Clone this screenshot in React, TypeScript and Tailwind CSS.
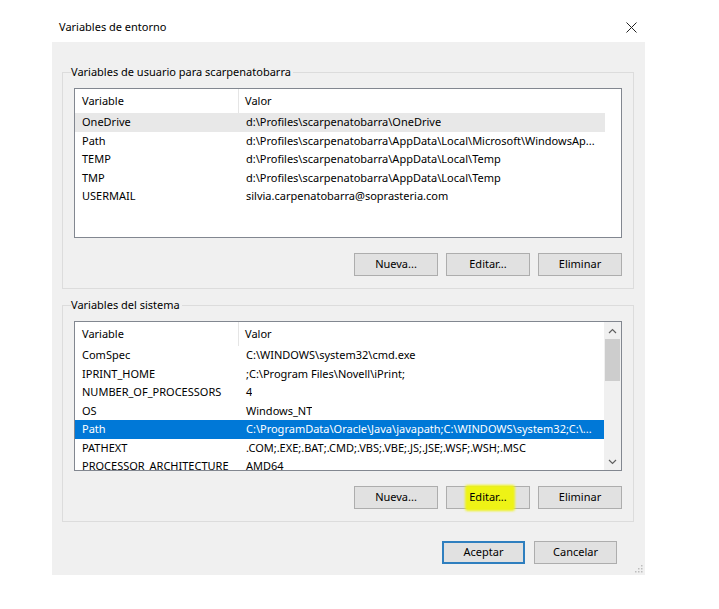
import React from "react";

type Row = { name: string; value: string; sel?: "gray" | "blue" };

const userRows: Row[] = [
  { name: "OneDrive", value: "d:\\Profiles\\scarpenatobarra\\OneDrive", sel: "gray" },
  { name: "Path", value: "d:\\Profiles\\scarpenatobarra\\AppData\\Local\\Microsoft\\WindowsAp..." },
  { name: "TEMP", value: "d:\\Profiles\\scarpenatobarra\\AppData\\Local\\Temp" },
  { name: "TMP", value: "d:\\Profiles\\scarpenatobarra\\AppData\\Local\\Temp" },
  { name: "USERMAIL", value: "silvia.carpenatobarra@soprasteria.com" },
];

const sysRows: Row[] = [
  { name: "ComSpec", value: "C:\\WINDOWS\\system32\\cmd.exe" },
  { name: "IPRINT_HOME", value: ";C:\\Program Files\\Novell\\iPrint;" },
  { name: "NUMBER_OF_PROCESSORS", value: "4" },
  { name: "OS", value: "Windows_NT" },
  { name: "Path", value: "C:\\ProgramData\\Oracle\\Java\\javapath;C:\\WINDOWS\\system32;C:\\...", sel: "blue" },
  { name: "PATHEXT", value: ".COM;.EXE;.BAT;.CMD;.VBS;.VBE;.JS;.JSE;.WSF;.WSH;.MSC" },
  { name: "PROCESSOR_ARCHITECTURE", value: "AMD64" },
];

function Chevron({ up }: { up?: boolean }) {
  return (
    <svg width="9" height="6" viewBox="0 0 9 6">
      <polyline
        points={up ? "1,5 4.5,1.5 8,5" : "1,1 4.5,4.5 8,1"}
        fill="none"
        stroke="#606060"
        strokeWidth="1.2"
      />
    </svg>
  );
}

function Btn({ label, highlight, primary, w = "w-[84px]" }: { label: string; highlight?: boolean; primary?: boolean; w?: string }) {
  return (
    <div
      className={`relative ${w} h-[23px] flex items-center justify-center bg-[#e1e1e1] text-black ${
        primary ? "border-2 border-[#2f7fbf]" : "border border-[#adadad]"
      }`}
    >
      {highlight && (
        <span className="absolute left-[18px] top-[-2px] w-[50px] h-[26px] bg-[#eef316] rounded-[3px] blur-[1px]" />
      )}
      <span className="relative">{label}</span>
    </div>
  );
}

function List({ rows, scroll }: { rows: Row[]; scroll?: boolean }) {
  return (
    <div className="h-[150px] w-full border border-[#828790] bg-white flex overflow-hidden">
      <div className="flex-1 min-w-0 flex flex-col overflow-hidden">
        <div className="h-[24px] shrink-0 flex items-center">
          <div className="w-[164px] shrink-0 h-full flex items-center pl-[7px] border-r border-[#e5e5e5]">Variable</div>
          <div className="pl-[6px]">Valor</div>
        </div>
        {rows.map((r, i) => (
          <div
            key={i}
            className={`h-[18.5px] shrink-0 w-[530px] flex items-center whitespace-nowrap overflow-hidden ${
              r.sel === "gray" ? "bg-[#e8e8e8]" : r.sel === "blue" ? "bg-[#0078d7] text-white" : ""
            }`}
          >
            <div className="w-[164px] shrink-0 pl-[7px] overflow-hidden">{r.name}</div>
            <div className="pl-[7px] min-w-0 overflow-hidden">{r.value}</div>
          </div>
        ))}
      </div>
      {scroll && (
        <div className="w-[17px] shrink-0 bg-[#f0f0f0] flex flex-col">
          <div className="h-[17px] flex items-center justify-center">
            <Chevron up />
          </div>
          <div className="h-[42px] mx-[1px] bg-[#cdcdcd]" />
          <div className="flex-1" />
          <div className="h-[17px] flex items-center justify-center">
            <Chevron />
          </div>
        </div>
      )}
    </div>
  );
}

function Group({ title, children, className = "" }: { title: string; children: React.ReactNode; className?: string }) {
  return (
    <div className={`relative h-[217px] border border-[#dcdcdc] px-[11px] pt-[15px] ${className}`}>
      <span className="absolute left-[8px] top-[-10px] bg-[#f0f0f0] pr-[2px] leading-[18px]">{title}</span>
      {children}
    </div>
  );
}

export default function App() {
  return (
    <div
      className="w-[719px] h-[609px] bg-white text-[11px] text-black overflow-hidden"
      style={{ fontFamily: '"Noto Sans", "Open Sans", sans-serif' }}
    >
      <div className="h-[42px] pt-[12px] pl-[59px] pr-[82px] flex items-center justify-between">
        <span>Variables de entorno</span>
        <svg width="11" height="11" viewBox="0 0 11 11">
          <line x1="0.5" y1="0.5" x2="10.5" y2="10.5" stroke="#222" strokeWidth="1" />
          <line x1="10.5" y1="0.5" x2="0.5" y2="10.5" stroke="#222" strokeWidth="1" />
        </svg>
      </div>
      <div className="relative ml-[52px] w-[593px] h-[533px] bg-[#f0f0f0] pt-[30px] pl-[10px] pr-[11px]">
        <Group title="Variables de usuario para scarpenatobarra">
          <List rows={userRows} />
          <div className="mt-[15px] flex justify-end gap-[8px]">
            <Btn label="Nueva..." />
            <Btn label="Editar..." />
            <Btn label="Eliminar" />
          </div>
        </Group>
        <Group title="Variables del sistema" className="mt-[16px]">
          <List rows={sysRows} scroll />
          <div className="mt-[15px] flex justify-end gap-[8px]">
            <Btn label="Nueva..." />
            <Btn label="Editar..." highlight />
            <Btn label="Eliminar" />
          </div>
        </Group>
        <div className="mt-[19px] pr-[17px] flex justify-end gap-[9px]">
          <Btn label="Aceptar" primary w="w-[83px]" />
          <Btn label="Cancelar" w="w-[83px]" />
        </div>
        <svg className="absolute right-[2px] bottom-[2px]" width="8" height="8" viewBox="0 0 8 8">
          <rect x="6" y="0" width="1.5" height="1.5" fill="#bdbdbd" />
          <rect x="3" y="3" width="1.5" height="1.5" fill="#bdbdbd" />
          <rect x="6" y="3" width="1.5" height="1.5" fill="#bdbdbd" />
          <rect x="0" y="6" width="1.5" height="1.5" fill="#bdbdbd" />
          <rect x="3" y="6" width="1.5" height="1.5" fill="#bdbdbd" />
          <rect x="6" y="6" width="1.5" height="1.5" fill="#bdbdbd" />
        </svg>
      </div>
    </div>
  );
}
